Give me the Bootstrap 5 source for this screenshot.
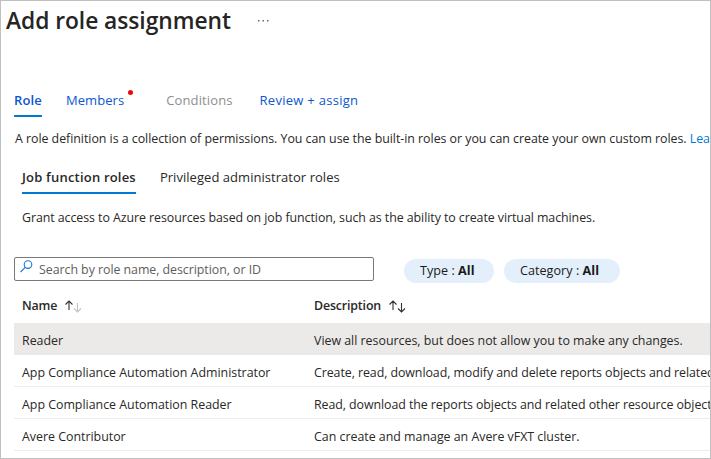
<!DOCTYPE html>
<html lang="en">
<head>
<meta charset="utf-8">
<title>Add role assignment</title>
<link href="https://cdn.jsdelivr.net/npm/bootstrap@5.3.0/dist/css/bootstrap.min.css" rel="stylesheet">
<style>
body{font-family:"Open Sans","Noto Sans",sans-serif;font-size:12.4px;line-height:18px;letter-spacing:-.01px;color:#292827;background:#fff}
.blade{height:459px;border:1px solid #c0c0c0;padding-left:13px}
.blade-head{height:40px;margin-left:-8px;gap:27px}
.blade-title{font-size:22.8px;line-height:32px;font-weight:600;letter-spacing:-.05px;color:#262524}
.main-tabs{height:26px;margin-top:50px;gap:24px}
.main-tabs .nav-link,.sub-tabs .nav-link{padding:0;height:26px;font-size:13px;letter-spacing:.07px;color:#0b57d0;border-bottom:2px solid transparent;border-radius:0}
.main-tabs .nav-link.active,.sub-tabs .nav-link.active{font-weight:600;border-bottom-color:#0078d4}
.main-tabs .nav-link.active{letter-spacing:.15px}
.sub-tabs .nav-link.active{letter-spacing:.2px}
.main-tabs .nav-link.disabled{color:#8f8e8d;margin-left:18px;letter-spacing:.12px}
.main-tabs .nav-link:last-child{margin-left:3px;letter-spacing:.28px}
.alert-dot{width:5px;height:5px;background:#f00909;left:62px;top:-1px}
.intro{margin:13px 0 0 1px;letter-spacing:-.037px}
.intro a{color:#0078d4}
.sub-tabs{margin:20px 0 0 8px;gap:24px}
.sub-tabs .nav-link{color:#292827;letter-spacing:.04px}
.hint{margin:15px 0 0 8px;letter-spacing:-.065px}
.filters{margin-top:30px;height:26px}
.search-box{width:360px;height:24px;border:1px solid #7a7978;border-radius:2px;padding-left:5px;color:#605e5c;letter-spacing:-.05px}
.search-box svg{margin-right:6px;margin-top:2px}
.search-box .hint-text{padding-top:3px}
.pill-filter{height:24px;background:#e3f0fb;color:#1b1a19;font-size:12.6px;padding:0 20px 0 16px;letter-spacing:.03px}
.pill-type{margin-left:30px;width:90px}
.pill-category{margin-left:10px;width:116px}
.role-head,.role-row{display:grid;grid-template-columns:292px 1fr;padding-left:8px}
.role-head{height:40px;padding-top:14px;font-weight:600;letter-spacing:-.15px}
.role-row{height:32px;border-bottom:1px solid #efeeed;padding-top:9px}
.role-row.selected{background:#ebeae9;border-color:#ebeae9}
.long-text{letter-spacing:-.07px}
.sort{margin-left:8px;margin-top:3px}
</style>
<script src="https://cdn.jsdelivr.net/npm/bootstrap@5.3.0/dist/js/bootstrap.bundle.min.js"></script>
</head>
<body>
<main class="blade overflow-hidden text-nowrap">
  <header class="blade-head d-flex align-items-center">
    <h1 class="blade-title mb-0">Add role assignment</h1>
    <svg width="11" height="2" fill="#6b6a69"><path d="M0 0h1.500v1.500H0zM4.500 0H6v1.500H4.500zM9 0h1.500v1.500H9z"/></svg>
  </header>
  <nav class="nav main-tabs flex-nowrap">
    <a class="nav-link active" href="#">Role</a>
    <a class="nav-link position-relative" href="#">Members<i class="alert-dot rounded-circle position-absolute"></i></a>
    <a class="nav-link disabled" href="#">Conditions</a>
    <a class="nav-link" href="#">Review + assign</a>
  </nav>
  <p class="intro mb-0">A role definition is a collection of permissions. You can use the built-in roles or you can create your own custom roles. <a class="text-decoration-none" href="#">Learn</a></p>
  <nav class="nav sub-tabs flex-nowrap">
    <a class="nav-link active" href="#">Job function roles</a>
    <a class="nav-link" href="#">Privileged administrator roles</a>
  </nav>
  <p class="hint mb-0">Grant access to Azure resources based on job function, such as the ability to create virtual machines.</p>
  <div class="filters d-flex">
    <div class="search-box d-flex">
      <svg width="13" height="13" fill="none" stroke="#0f7ad6" stroke-width="1.1"><circle cx="8" cy="4.600" r="3.800"/><path d="M5.200 7.400L.6 12"/></svg>
      <span class="hint-text">Search by role name, description, or ID</span>
    </div>
    <div class="pill-filter pill-type rounded-pill d-flex align-items-center align-self-end"><span>Type : <b>All</b></span></div>
    <div class="pill-filter pill-category rounded-pill d-flex align-items-center align-self-end"><span>Category : <b>All</b></span></div>
  </div>
  <div class="role-head">
    <div class="d-flex align-items-start">Name<svg class="sort" width="17" height="14" fill="none" stroke="#323130" stroke-width="1.1"><path d="M4 10V1M.5 4.500L4 1l3.500 3.500"/><path stroke="#c4c3c2" d="M12.500 3v9M9 8.500l3.500 3.500 3.500-3.500"/></svg></div>
    <div class="d-flex align-items-start">Description<svg class="sort" width="17" height="14" fill="none" stroke="#323130" stroke-width="1.1"><path d="M4 10V1M.5 4.500L4 1l3.500 3.500M12.500 3v9M9 8.500l3.500 3.500 3.500-3.500"/></svg></div>
  </div>
  <div class="role-row selected"><div>Reader</div><div>View all resources, but does not allow you to make any changes.</div></div>
  <div class="role-row"><div>App Compliance Automation Administrator</div><div class="long-text">Create, read, download, modify and delete reports objects and related</div></div>
  <div class="role-row"><div>App Compliance Automation Reader</div><div class="long-text">Read, download the reports objects and related other resource objects</div></div>
  <div class="role-row"><div>Avere Contributor</div><div>Can create and manage an Avere vFXT cluster.</div></div>
</main>
</body>
</html>
